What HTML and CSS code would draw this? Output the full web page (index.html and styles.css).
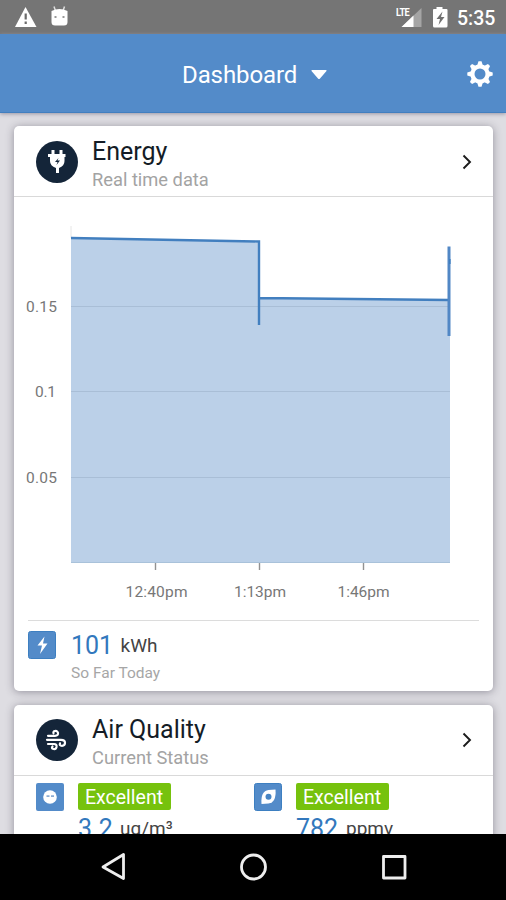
FILE: index.html
```html
<!DOCTYPE html>
<html lang="en">
<head>
<meta charset="utf-8">
<title>Dashboard</title>
<link rel="stylesheet" href="styles.css">
</head>
<body>
<div class="status">
  <svg class="status-left" width="60" height="34" viewBox="0 0 60 34">
    <path d="M10.500 7 21.500 27H0z" fill="#fff"/><path d="M10.700 13.500v6M10.700 21.500v2.500" stroke="#6b6b6b" stroke-width="2.200"/>
    <path d="M40.500 11l-1.500-4.500M48 11l1.500-4.500" fill="none" stroke="#ddd" stroke-width="1.500"/>
    <path d="M36.500 11q4-2 8-2t8 2v11q0 3.500-3.500 3.500h-9q-3.500 0-3.500-3.500z" fill="#fff"/>
    <path d="M39.500 17h2M47.500 17h2" stroke="#777" stroke-width="1.600"/>
  </svg>
  <div class="status-right">
    <span class="lte">LTE</span>
    <svg width="60" height="34" viewBox="0 0 60 34">
      <path d="M20.500 8v19h-20z" fill="#a5a5a5"/><path d="M12.500 15.500V27H.5z" fill="#fff"/>
      <path d="M35.500 7h6v2h4q1 0 1 1v16q0 1.500-1.500 1.500H33.500Q32 27.500 32 26V10q0-1 1-1H35.500z" fill="#fff"/>
      <path d="M41.500 11.500 35.500 19h3.500l-1.500 6 6-8h-3.500z" fill="#707070"/>
    </svg>
    <span class="clock">5:35</span>
  </div>
</div>
<header class="appbar">
  <span class="appbar-title">Dashboard</span>
  <svg class="caret" width="16" height="10" viewBox="0 0 16 10"><path d="M1 0h14q1 .5.500 1L9 8.500q-1 1-2 0L.5 1Q0 .5 1 0z" fill="#fff"/></svg>
  <svg class="gear" width="26" height="26" viewBox="-13 -13 26 26">
    <g fill="#fff"><path d="M-3-8-1.500-12.700h3L3-8v16l-1.500 4.700h-3L-3 8z"/><path transform="rotate(45)" d="M-3-8-1.500-12.700h3L3-8v16l-1.500 4.700h-3L-3 8z"/><path transform="rotate(90)" d="M-3-8-1.500-12.700h3L3-8v16l-1.500 4.700h-3L-3 8z"/><path transform="rotate(135)" d="M-3-8-1.500-12.700h3L3-8v16l-1.500 4.700h-3L-3 8z"/><circle r="9.700"/></g>
    <circle r="5.500" fill="#538bc9"/>
  </svg>
</header>
<main class="content">
  <section class="card">
    <div class="card-head">
      <svg class="disc low" width="42" height="42" viewBox="0 0 42 42"><circle cx="21" cy="21" r="21" fill="#142539"/>
        <path d="M15.500 9h3v4h5V9h3v4h3v3h-1v4q0 5-5.500 7v5h-3v-5q-6-2-6-7v-4h-2v-3h3.500z" fill="#fff"/><path d="m22.500 17-3.500 4h2.500l-1 3 3.500-4.500h-2.500z" fill="#142539"/></svg>
      <div class="head-text low"><div class="title">Energy</div><div class="sub">Real time data</div></div>
      <svg class="chev low" width="10" height="16" viewBox="0 0 10 16"><path d="m1.500 1.500 6.500 6.500-6.500 6.500" fill="none" stroke="#1b1b1b" stroke-width="1.900"/></svg>
    </div>
    <svg class="chart" width="479" height="423" viewBox="14 197 479 423">
      <path d="M71 226v12" stroke="#e6e6e6"/>
      <path d="M71 238 259 242V298L450 300V563H71z" fill="#bbd0e8"/>
      <path d="M71 306.500H450M71 391.500H450M71 477.500H450" stroke="#a9bed6"/>
      <path d="M71 562.500H450" stroke="#a9c2da"/>
      <path d="M71 238 259 241.500V325M259 298 449 300" fill="none" stroke="#427fbf" stroke-width="2.400"/>
      <path d="M449 246.500V336" stroke="#5187c5" stroke-width="3"/><path d="M450 259v5" stroke="#2873b9"/>
      <path d="M155.500 563v7M259.500 563v7M363.500 563v7" stroke="#929292" stroke-width="1.400"/>
      <g class="axis"><text x="26" y="311.500" textLength="31">0.15</text><text x="35" y="397" textLength="21">0.1</text><text x="26" y="482.500" textLength="31">0.05</text>
      <text x="125.500" y="597" textLength="62">12:40pm</text><text x="234" y="597" textLength="52">1:13pm</text><text x="337.500" y="597" textLength="52">1:46pm</text></g>
    </svg>
    <div class="total">
      <svg width="28" height="28" viewBox="0 0 28 28"><rect x=".5" y=".5" width="27" height="27" rx="2" fill="#538bc9" stroke="#3d7fc1"/><path d="m16.500 5.500-7 9H14l-2 8.500 7.500-10.500H15z" fill="#fff"/></svg>
      <div><div class="reading"><span class="num n101">101</span><span class="unit">kWh</span></div><div class="sofar">So Far Today</div></div>
    </div>
  </section>
  <section class="card">
    <div class="card-head">
      <svg class="disc" width="42" height="42" viewBox="0 0 42 42"><circle cx="21" cy="21" r="21" fill="#142539"/>
        <g fill="none" stroke="#fff" stroke-width="2.200" stroke-linecap="round"><path d="M12 16.800h7q3.500 0 3-3-1-3-4-1.500-1 1-.5 2M11 20.800h14q4 0 4 3t-3 3q-3 0-2-2.500M12 25h6q3 0 2.500 3-.500 2.500-3 2t-1-2.500"/></g></svg>
      <div class="head-text"><div class="title">Air Quality</div><div class="sub">Current Status</div></div>
      <svg class="chev" width="10" height="16" viewBox="0 0 10 16"><path d="m1.500 1.500 6.500 6.500-6.500 6.500" fill="none" stroke="#1b1b1b" stroke-width="1.900"/></svg>
    </div>
    <div class="metrics">
      <div class="metric">
        <svg width="28" height="28" viewBox="0 0 28 28"><rect width="28" height="28" rx="2" fill="#538bc9"/><circle cx="14" cy="14" r="6.800" fill="#fff"/><path d="M10.500 13.200h3M15 13.200h3" stroke="#8bacd3" stroke-width="1.800"/></svg>
        <div><span class="badge">Excellent</span><div class="reading2"><span class="num n32">3.2</span><span class="unit">ug/m³</span></div></div>
      </div>
      <div class="metric">
        <svg width="28" height="28" viewBox="0 0 28 28"><rect x=".5" y=".5" width="27" height="27" rx="2" fill="#538bc9" stroke="#3d7fc1"/><path d="M21.500 6.500q1 13-7 14l-7 .5q-1-13 7-14z" fill="#fff"/><circle cx="14.500" cy="13.800" r="3" fill="#4684c4"/></svg>
        <div><span class="badge">Excellent</span><div class="reading2"><span class="num n782">782</span><span class="unit">ppmv</span></div></div>
      </div>
    </div>
  </section>
</main>
<nav class="nav">
  <svg width="506" height="66" viewBox="0 834 506 66" fill="none" stroke="#eee" stroke-width="2.800" stroke-linejoin="round"><path d="M123.500 854.500v24L103 867z"/><circle cx="253.500" cy="867" r="12"/><rect x="383.500" y="856.500" width="21.500" height="21.500"/></svg>
</nav>
</body>
</html>
```
FILE: styles.css
```css
* { box-sizing: border-box; }
body { margin: 0; width: 506px; height: 900px; overflow: hidden; display: flex; flex-direction: column; font-family: Roboto, sans-serif; background: #dedde2; }
svg { display: block; flex: none; }
span { white-space: nowrap; }
.status { height: 34px; flex: none; background: #757575; display: flex; justify-content: space-between; padding: 0 11px 0 15px; color: #fff; }
.status-right { display: flex; position: relative; margin-left: auto; }
.lte { position: absolute; left: -5px; top: 6px; font-size: 11.5px; line-height: 13px; font-weight: 700; letter-spacing: -0.7px; transform: scaleX(.8); transform-origin: left; }
.clock { font-size: 19.5px; line-height: 37px; font-weight: 500; width: 38px; }
.status-right svg { margin-right: -4px; }
.appbar { height: 79px; flex: none; background: #538bc9; border-bottom: 1px solid #427fbf; display: flex; align-items: center; padding: 0 13px 0 182px; color: #fff; box-shadow: 0 1px 4px #9995a5; z-index: 1; }
.appbar-title { font-size: 24px; letter-spacing: -.1px; width: 129px; margin-top: 3px; }
.caret { margin-top: 3px; }
.gear { margin-left: auto; margin-top: 1px; }
.content { height: 721px; flex: none; overflow: hidden; padding: 13px 13px 0 14px; display: flex; flex-direction: column; gap: 14px; }
.card { background: #fff; border-radius: 5px; box-shadow: 0 1px 8px rgba(65,60,80,.48); flex: none; }
.card-head { height: 71px; border-bottom: 1px solid #d9d9d9; display: flex; align-items: center; padding: 0 21px 0 22px; }
.low { margin-top: 2px; }
.head-text { margin-left: 14px; flex: 1; padding-top: 4px; }
.title { color: #141c26; font-size: 25px; line-height: 30px; }
.sub { color: #a3a3a3; font-size: 18.3px; line-height: 24px; margin-top: 1px; }
.axis { fill: #777; font-size: 15.5px; }
.total { height: 71px; margin: 0 14px; border-top: 1px solid #dcdcdc; display: flex; padding-top: 10px; gap: 15px; }
.reading { display: flex; align-items: baseline; line-height: 30px; }
.num { color: #3278bd; font-size: 25px; }
.unit { color: #444; font-size: 19px; position: relative; top: -2px; }
.sofar { color: #a6a6a6; font-size: 15.5px; line-height: 20px; }
.n101 { width: 49.5px; }
.metrics { display: flex; padding: 7px 0 0 22px; height: 110px; }
.metric { display: flex; width: 218px; gap: 14px; }
.badge { display: block; width: 93px; height: 27px; border-radius: 2px; background: #76c20d; color: #fff; font-size: 19.5px; line-height: 29px; text-align: center; text-indent: -1px; }
.reading2 { display: flex; align-items: baseline; line-height: 30px; margin-top: 4px; }
.n32 { width: 42px; }
.n782 { width: 50px; }
.nav { height: 66px; background: #000; flex: none; }
```
